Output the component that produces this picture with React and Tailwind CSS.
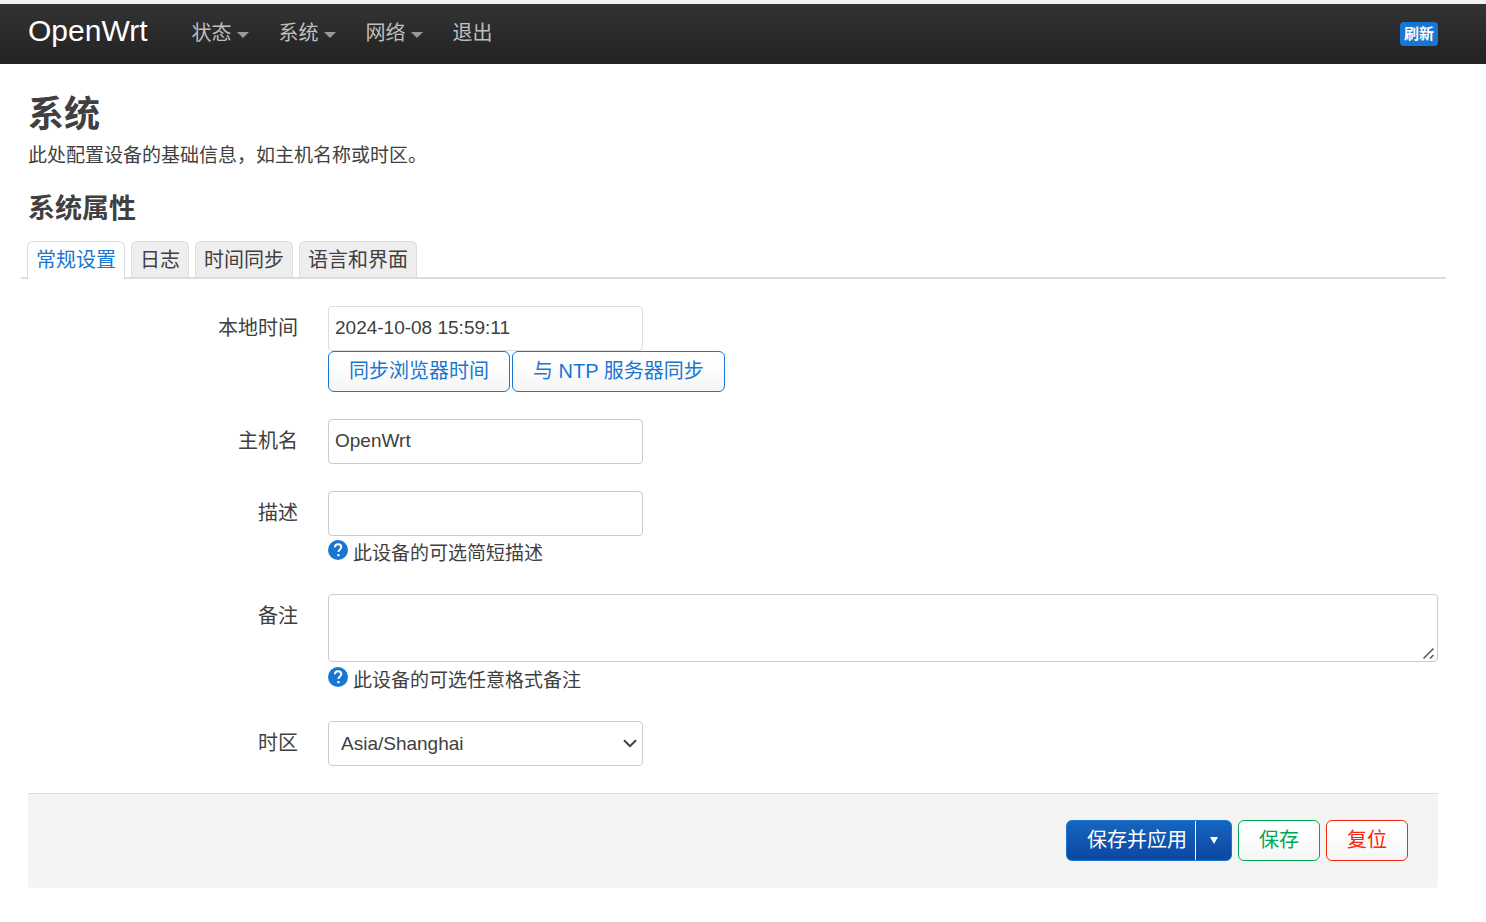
import React, { useState } from "react";

const MENU = [
  { label: "状态", dropdown: true },
  { label: "系统", dropdown: true },
  { label: "网络", dropdown: true },
  { label: "退出", dropdown: false },
];

const TABS = ["常规设置", "日志", "时间同步", "语言和界面"];

const inputClasses =
  "block h-[45px] w-[315px] rounded border bg-white px-1.5 pb-0.5 text-[19px] outline-none focus:border-[#1976d2]";

export default function App() {
  const [activeTab, setActiveTab] = useState(TABS[0]);
  const [hostname, setHostname] = useState("OpenWrt");
  const [description, setDescription] = useState("");
  const [notes, setNotes] = useState("");

  return (
    <div className="bg-white font-['Liberation_Sans','Noto_Sans_CJK_SC',sans-serif] text-[20px] leading-[27px] text-[#404040]">
      <Header />

      <main className="mr-12 ml-7 pt-6">
        <h2 className="text-4xl leading-[54px] font-bold">系统</h2>
        <p className="text-[19px]">
          此处配置设备的基础信息，如主机名称或时区。
        </p>
        <h3 className="mt-[13px] text-[27px] leading-[54px] font-bold">
          系统属性
        </h3>

        {/* Tabs */}
        <div
          role="tablist"
          className="mt-[5px] -mr-2 -ml-[7px] flex gap-1.5 border-b-2 border-[#ddd] pl-1.5"
        >
          {TABS.map((tab) => (
            <TabButton
              key={tab}
              label={tab}
              active={tab === activeTab}
              onClick={() => setActiveTab(tab)}
            />
          ))}
        </div>

        <form
          className="mt-[27px]"
          onSubmit={(e) => e.preventDefault()}
          onReset={() => {
            setHostname("OpenWrt");
            setDescription("");
            setNotes("");
          }}
        >
          <div className="flex flex-col gap-[27px]">
            <Field id="localtime" label="本地时间">
              <input
                id="localtime"
                readOnly
                value="2024-10-08 15:59:11"
                className={`${inputClasses} border-[#ddd]`}
              />
              <div className="flex gap-0.5">
                <Button variant="action">同步浏览器时间</Button>
                <Button variant="action">与 NTP 服务器同步</Button>
              </div>
            </Field>

            <Field id="hostname" label="主机名">
              <input
                id="hostname"
                value={hostname}
                onChange={(e) => setHostname(e.target.value)}
                className={`${inputClasses} border-[#ccc]`}
              />
            </Field>

            <Field id="description" label="描述" help="此设备的可选简短描述">
              <input
                id="description"
                value={description}
                onChange={(e) => setDescription(e.target.value)}
                className={`${inputClasses} border-[#ccc]`}
              />
            </Field>

            <Field id="notes" label="备注" help="此设备的可选任意格式备注">
              <div className="relative mb-px">
                <textarea
                  id="notes"
                  value={notes}
                  onChange={(e) => setNotes(e.target.value)}
                  className="block h-[68px] w-full resize-y rounded border border-[#ccc] bg-white px-1.5 py-1 text-[19px] outline-none focus:border-[#1976d2]"
                />
                <ResizeGrip />
              </div>
            </Field>

            <Field id="timezone" label="时区">
              <div className="relative w-[315px]">
                <select
                  id="timezone"
                  defaultValue="Asia/Shanghai"
                  className="block h-[45px] w-full appearance-none rounded border border-[#ccc] bg-white pr-8 pl-3 text-[19px]"
                >
                  <option>UTC</option>
                  <option>Asia/Shanghai</option>
                  <option>Asia/Tokyo</option>
                </select>
                <svg
                  width="14"
                  height="9"
                  viewBox="0 0 14 9"
                  aria-hidden="true"
                  className="pointer-events-none absolute top-[18px] right-1.5"
                >
                  <path
                    d="M1 1.2l6 6 6-6"
                    fill="none"
                    stroke="currentColor"
                    strokeWidth="2"
                  />
                </svg>
              </div>
            </Field>
          </div>

          {/* Page actions */}
          <div className="mt-[27px] flex justify-end gap-1.5 rounded-b border-t border-[#ddd] bg-[#f4f4f4] pt-[26px] pr-[30px] pb-[27px]">
            <div className="flex h-[41px] rounded-md border border-[#1976d2] bg-linear-to-b from-[#1565c0] to-[#0d47a1] text-white">
              <button type="submit" className="pr-2 pl-5">
                保存并应用
              </button>
              <button
                type="button"
                aria-label="更多"
                className="flex w-9 items-center justify-center border-l border-white"
              >
                <svg width="8" height="7" viewBox="0 0 8 7" aria-hidden="true">
                  <path d="M0 0h8L4 7z" fill="currentColor" />
                </svg>
              </button>
            </div>
            <Button variant="save">保存</Button>
            <Button variant="reset" type="reset">
              复位
            </Button>
          </div>
        </form>
      </main>
    </div>
  );
}

// Top navigation bar
function Header() {
  return (
    <header className="border-t-4 border-[#f2f2f2]">
      <div className="flex h-[60px] items-center bg-linear-to-b from-[#333] to-[#222] pr-12 pl-7">
        <a href="#" className="pb-[7px] text-3xl text-white">
          OpenWrt
        </a>
        <nav className="ml-11 flex gap-[30px] pb-px">
          {MENU.map((item) => (
            <a
              key={item.label}
              href="#"
              className="flex items-center gap-[5px] text-[#bfbfbf] hover:text-white"
            >
              {item.label}
              {item.dropdown && (
                <svg
                  width="12"
                  height="6"
                  viewBox="0 0 12 6"
                  aria-hidden="true"
                  className="mt-0.5 text-[#999]"
                >
                  <path d="M0 0h12L6 6z" fill="currentColor" />
                </svg>
              )}
            </a>
          ))}
        </nav>
        <button
          type="button"
          className="ml-auto h-6 rounded bg-[#1976d2] px-1 text-[15px] leading-6 font-bold text-white"
        >
          刷新
        </button>
      </div>
    </header>
  );
}

function TabButton({ label, active, onClick }) {
  return (
    <button
      type="button"
      role="tab"
      aria-selected={active}
      onClick={onClick}
      className={`rounded-t-md border border-b-0 border-[#ddd] px-2 pt-[5px] ${
        active
          ? "-mb-0.5 bg-white pb-[5px] text-[#1976d2]"
          : "bg-[#eee] pb-[3px]"
      }`}
    >
      {label}
    </button>
  );
}

// Label on the left, control and optional help text on the right
function Field({ id, label, help, children }) {
  return (
    <div className="flex gap-[30px]">
      <label htmlFor={id} className="w-[270px] shrink-0 pt-[9px] text-right">
        {label}
      </label>
      <div className="min-w-0 flex-1">
        {children}
        {help && (
          <p className="flex items-start gap-[5px] pt-1 text-[19px]">
            <HelpIcon />
            {help}
          </p>
        )}
      </div>
    </div>
  );
}

function Button({ variant, type = "button", children }) {
  const variantClasses = {
    action: "border-[#1976d2] text-[#1976d2]",
    save: "border-[#00a854] text-[#00a854]",
    reset: "border-[#f5290f] text-[#f5290f]",
  };

  return (
    <button
      type={type}
      className={`h-[41px] rounded-md border bg-linear-to-b from-white from-25% to-[#f5f5f5] px-5 ${variantClasses[variant]}`}
    >
      {children}
    </button>
  );
}

// Drag handle drawn over the textarea corner
function ResizeGrip() {
  return (
    <svg
      width="14"
      height="14"
      viewBox="0 0 14 14"
      aria-hidden="true"
      className="pointer-events-none absolute right-0.5 bottom-0.5 bg-white"
    >
      <path
        d="M1.5 12.5l10-10M8 12.5l3.5-3.5"
        stroke="#555"
        strokeWidth="1.5"
      />
    </svg>
  );
}

function HelpIcon() {
  return (
    <svg
      width="20"
      height="20"
      viewBox="0 0 20 20"
      aria-hidden="true"
      className="shrink-0"
    >
      <circle cx="10" cy="10" r="10" fill="#1976d2" />
      <path
        d="M6.9 7.2C7 5.3 8.300 4.200 10.100 4.200c1.900 0 3.200 1.100 3.200 2.800 0 2.300-2.900 2.500-2.900 5"
        fill="none"
        stroke="#fff"
        strokeWidth="2"
      />
      <rect x="9.200" y="14" width="2.400" height="2.300" rx="0.800" fill="#fff" />
    </svg>
  );
}
